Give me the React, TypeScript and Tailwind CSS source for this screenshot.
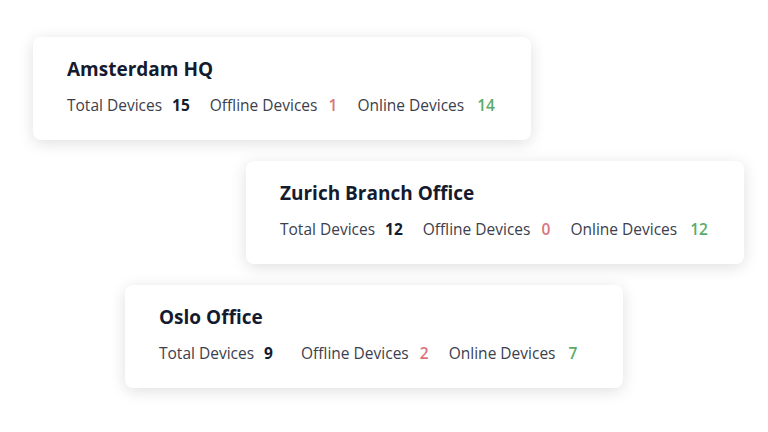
const sites = [
  { name: "Amsterdam HQ", total: 15, offline: 1, online: 14, offset: "ml-[33px]" },
  { name: "Zurich Branch Office", total: 12, offline: 0, online: 12, offset: "ml-[246px]" },
  { name: "Oslo Office", total: 9, offline: 2, online: 7, offset: "ml-[125px]" },
];

function SiteCard({ site }: { site: (typeof sites)[number] }) {
  return (
    <div
      className={`${site.offset} h-[103px] w-[498px] rounded-[8px] bg-white pl-[34px] pt-[19px] shadow-[0_3px_16px_rgba(0,0,0,0.13)]`}
    >
      <h2 className="text-[19px] font-bold leading-[26px] text-[#151b2e]">{site.name}</h2>
      <div className="mt-[13px] flex items-baseline text-[15.5px] leading-[21px] text-[#3b404c]">
        <span>Total Devices</span>
        <span className="ml-[10px] min-w-[17px] font-bold text-[#151b2e]">{site.total}</span>
        <span className="ml-[20px]">Offline Devices</span>
        <span className="ml-[11px] min-w-[10px] font-semibold text-[#d9737c]">{site.offline}</span>
        <span className="ml-[19px]">Online Devices</span>
        <span className="ml-[13px] font-semibold text-[#5aab69]">{site.online}</span>
      </div>
    </div>
  );
}

export default function App() {
  return (
    <div
      className="flex h-[432px] w-[768px] flex-col gap-[21px] bg-white pt-[37px]"
      style={{ fontFamily: '"Open Sans", "Noto Sans", sans-serif' }}
    >
      {sites.map((s) => (
        <SiteCard key={s.name} site={s} />
      ))}
    </div>
  );
}
